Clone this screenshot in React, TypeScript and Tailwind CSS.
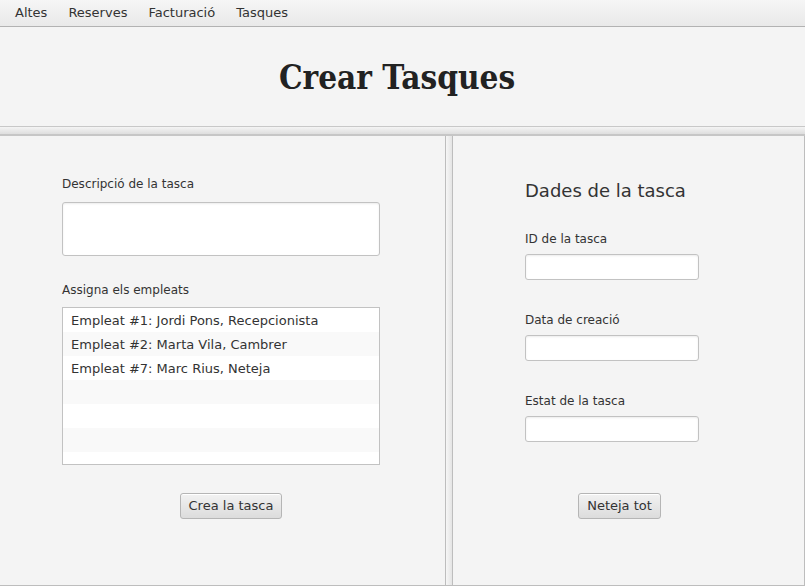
import { useState } from 'react';

const EMPLOYEES = [
  'Empleat #1: Jordi Pons, Recepcionista',
  'Empleat #2: Marta Vila, Cambrer',
  'Empleat #7: Marc Rius, Neteja',
];

const FIELDS = ['ID de la tasca', 'Data de creació', 'Estat de la tasca'];

const sans = "font-['DejaVu_Sans',sans-serif]";

function Field({ label }: { label: string }) {
  return (
    <div className="flex flex-col">
      <label className="text-[12px] leading-[16px] text-[#333]">{label}</label>
      <input
        className="mt-[7px] h-[26px] w-[174px] rounded-[3px] border border-[#c2c2c2] bg-white shadow-[inset_0_1px_2px_rgba(0,0,0,0.08)] outline-none"
        type="text"
      />
    </div>
  );
}

function FxButton({ children }: { children: string }) {
  return (
    <button className="h-[26px] rounded-[3px] border border-[#b5b5b5] bg-gradient-to-b from-[#f2f2f2] to-[#dcdcdc] px-[8px] text-[13px] text-[#333] shadow-[inset_0_1px_0_#fff]">
      {children}
    </button>
  );
}

export default function App() {
  const [desc, setDesc] = useState('');

  return (
    <div className={`${sans} flex h-[586px] w-[805px] flex-col bg-[#f4f4f4]`}>
      {/* menu bar */}
      <nav className="flex h-[27px] items-center gap-[21px] border-b border-[#b2b2b2] bg-gradient-to-b from-[#f6f6f6] to-[#e9e9e9] pl-[15px] text-[13px] text-[#333]">
        <span>Altes</span>
        <span>Reserves</span>
        <span>Facturació</span>
        <span>Tasques</span>
      </nav>

      {/* header */}
      <header className="flex h-[100px] items-center justify-center border-b border-[#c8c8c8] pt-[2px] pr-[11px]">
        <h1 className="font-['DejaVu_Serif',serif] text-[33px] font-bold text-[#222] [font-stretch:condensed]">
          Crear Tasques
        </h1>
      </header>

      {/* split pane */}
      <div className="flex flex-1 flex-col">
        <div className="h-[9px] bg-gradient-to-b from-[#f4f4f4] to-[#dedede] border-b-[2px] border-[#c6c6c6]" />
        <div className="flex flex-1 border-b border-r border-[#bdbdbd]">
          <section className="flex w-[445px] flex-col pl-[62px] pt-[40px]">
            <label className="text-[12px] leading-[16px] text-[#333]">Descripció de la tasca</label>
            <textarea
              value={desc}
              onChange={(e) => setDesc(e.target.value)}
              className="mt-[10px] h-[54px] w-[318px] resize-none rounded-[3px] border border-[#c2c2c2] bg-white shadow-[inset_0_1px_2px_rgba(0,0,0,0.08)] outline-none"
            />
            <label className="mt-[26px] text-[12px] leading-[16px] text-[#333]">Assigna els empleats</label>
            <ul className="mt-[9px] h-[158px] w-[318px] overflow-hidden border border-[#c2c2c2] bg-white">
              {Array.from({ length: 7 }).map((_, i) => (
                <li
                  key={i}
                  className={`h-[24px] pl-[8px] pt-[1px] text-[13px] leading-[24px] text-[#333] ${i % 2 ? 'bg-[#f9f9f9]' : 'bg-white'}`}
                >
                  {EMPLOYEES[i] ?? ''}
                </li>
              ))}
            </ul>
            <div className="mt-[28px] flex w-[338px] justify-center">
              <FxButton>Crea la tasca</FxButton>
            </div>
          </section>

          {/* divider */}
          <div className="w-[8px] border-x border-[#bdbdbd] bg-gradient-to-r from-[#f6f6f6] to-[#e4e4e4]" />

          <section className="flex flex-1 flex-col pl-[72px] pt-[43px]">
            <h2 className="text-[18px] leading-[24px] text-[#333]">Dades de la tasca</h2>
            <div className="mt-[28px] flex flex-col gap-[32px]">
              {FIELDS.map((f) => (
                <Field key={f} label={f} />
              ))}
            </div>
            <div className="mt-[51px] flex w-[189px] justify-center">
              <FxButton>Neteja tot</FxButton>
            </div>
          </section>
        </div>
      </div>
    </div>
  );
}
